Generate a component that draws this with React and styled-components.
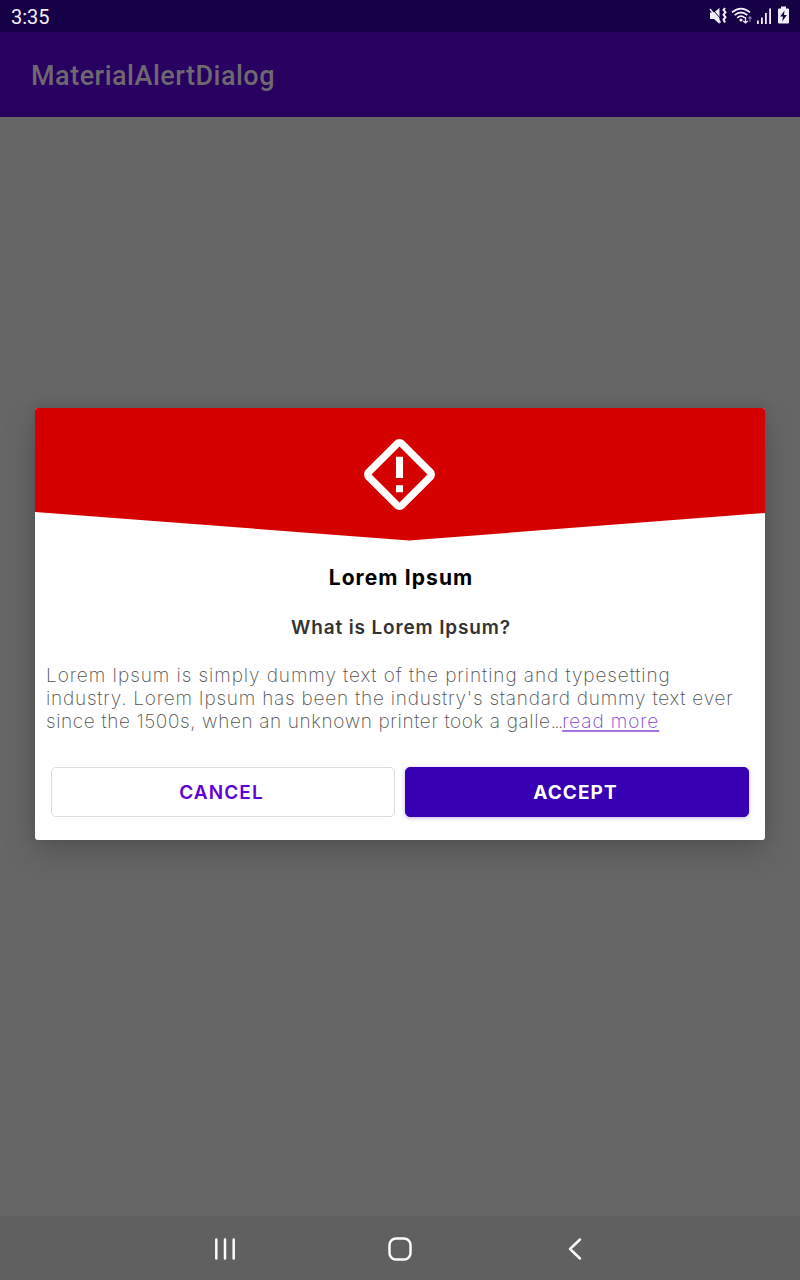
import React from 'react';
import styled, { createGlobalStyle } from 'styled-components';

const GlobalStyle = createGlobalStyle`
  * { box-sizing: border-box; }
  body { margin: 0; background: #666; }
`;

const Screen = styled.div`
  width: 800px;
  height: 1280px;
  display: flex;
  flex-direction: column;
  background: #666;
  overflow: hidden;
  font-family: Inter, 'Open Sans', sans-serif;
`;

const StatusBar = styled.header`
  height: 32px;
  flex: none;
  display: flex;
  align-items: center;
  justify-content: space-between;
  padding: 2px 10px 0 11px;
  background: #160046;
  color: #f3effa;
`;

const Clock = styled.span`
  font: 400 20px/30px Roboto, sans-serif;
`;

const StatusIcons = styled.svg`
  display: block;
  width: 82px;
  height: 20px;
  margin-top: -2px;
`;

const AppBar = styled.div`
  height: 85px;
  flex: none;
  display: flex;
  align-items: center;
  padding: 3px 31px 0;
  background: #270060;
`;

const AppTitle = styled.h1`
  margin: 0;
  color: #706870;
  font: 500 27px/32px Roboto, sans-serif;
  letter-spacing: 0.5px;
`;

const Content = styled.main`
  flex: 1;
  padding: 291px 35px 0;
`;

const Dialog = styled.section`
  height: 432px;
  border-radius: 3px;
  overflow: hidden;
  background: #fff;
  box-shadow: 0 12px 34px rgba(0, 0, 0, 0.18), 0 0 12px rgba(0, 0, 0, 0.1);
`;

const Banner = styled.div`
  height: 133px;
  padding-top: 24px;
  background: #d50000;
  clip-path: polygon(0 0, 100% 0, 100% 105px, 374px 132.5px, 0 104px);
`;

const WarningIcon = styled.svg`
  display: block;
  width: 85px;
  height: 85px;
  margin-left: 322px;
`;

const Title = styled.h2`
  margin: 22px 0 0;
  padding-left: 2px;
  text-align: center;
  color: #000;
  font-size: 21px;
  line-height: 30px;
  font-weight: 700;
  letter-spacing: ${(p) => p.$tracking}px;
`;

const Subtitle = styled.h3`
  margin: 20px 0 0;
  padding-left: 2px;
  text-align: center;
  color: #333;
  font-size: 19px;
  line-height: 30px;
  font-weight: 600;
  letter-spacing: ${(p) => p.$tracking}px;
`;

const Message = styled.p`
  margin: 21px 0 0;
  padding-left: 11px;
  color: #505050;
  font-size: 19px;
  line-height: 23px;
  font-weight: 200;
`;

const Line = styled.span`
  display: block;
  white-space: nowrap;
  letter-spacing: ${(p) => p.$tracking}px;
`;

const Dots = styled.span`
  letter-spacing: -1.6px;
  margin-right: 0.6px;
`;

const MoreLink = styled.a`
  color: #8040d8;
  letter-spacing: 0.9px;
  text-decoration: underline;
  text-decoration-color: #a673e2;
  text-decoration-thickness: 1.5px;
  text-underline-offset: 1.5px;
  text-decoration-skip-ink: none;
`;

const Actions = styled.div`
  display: grid;
  grid-template-columns: 1fr 1fr;
  gap: 10px;
  padding: 34px 16px 0;
`;

const Button = styled.button`
  height: 50px;
  padding: 0 3px 0 0;
  border-radius: 5px;
  border: 1px solid ${(p) => (p.$filled ? '#3700b3' : '#dedede')};
  background: ${(p) => (p.$filled ? '#3700b3' : '#fff')};
  color: ${(p) => (p.$filled ? '#fff' : '#6200d8')};
  box-shadow: ${(p) => (p.$filled ? '0 1px 4px rgba(55, 0, 179, 0.3)' : 'none')};
  font-family: inherit;
  font-size: 19px;
  font-weight: ${(p) => (p.$filled ? 700 : 600)};
  letter-spacing: ${(p) => p.$tracking}px;
`;

const NavBar = styled.nav`
  height: 64px;
  flex: none;
  display: flex;
  align-items: center;
  justify-content: center;
  gap: 135px;
  padding-top: 2px;
  background: #606060;
`;

const NavIcon = styled.svg`
  display: block;
  width: 40px;
  height: 40px;
  fill: none;
  stroke: #fafafa;
  stroke-width: 2.5;
  stroke-linecap: round;
  stroke-linejoin: round;
`;

function DeviceStatus() {
  return (
    <StatusIcons viewBox="708 6 82 20" fill="#f3effa">
      <path d="M710 12.5h4l5.5-4.8v16.3l-5.5-5h-4z" />
      <path d="M711 7.500l9.500 11" stroke="#160046" strokeWidth="1" />
      <path d="M710 9l10.500 13.500" stroke="#f3effa" strokeWidth="1.3" />
      <path d="M725 8l-1.500 2 2 2.200-2 2.500 2 2.500-2 2.300 1.500 3" fill="none" stroke="#f3effa" strokeWidth="2" />
      <g fill="none" stroke="#f3effa" strokeWidth="1.7">
        <path d="M732 12.4Q741 4.8 750 12.4" />
        <path d="M734.6 15.2Q741 9.8 747.4 15.2" />
        <path d="M737.2 17.8Q741 14.6 744.8 17.8" />
      </g>
      <circle cx="741" cy="20" r="1.6" />
      <path d="M745.5 17v6M743.2 21l2.3 2 2.3-2" fill="none" stroke="#f3effa" strokeWidth="1.3" />
      <path d="M750 22v-5M748.4 18.5l1.6-1.8 1.6 1.8" fill="none" stroke="#8f80ac" strokeWidth="1.1" />
      <path d="M757 20.5h1.8v3.5H757zM761 17.5h1.8v6.5H761zM765 13h1.8v11H765zM769.2 8.500h1.8v15.5h-1.8z" />
      <path d="M781 6.5h5v2h2a1 1 0 0 1 1 1v13a1 1 0 0 1-1 1h-9a1 1 0 0 1-1-1v-13a1 1 0 0 1 1-1h2z" />
      <path d="M784.5 10.5l-4.3 6h2.7l-.6 5 4.5-6.5h-2.8z" fill="#160046" />
    </StatusIcons>
  );
}

export default function App() {
  return (
    <Screen>
      <GlobalStyle />
      <StatusBar>
        <Clock>3:35</Clock>
        <DeviceStatus />
      </StatusBar>
      <AppBar>
        <AppTitle>MaterialAlertDialog</AppTitle>
      </AppBar>
      <Content>
        <Dialog role="alertdialog">
          <Banner>
            <WarningIcon viewBox="0 0 24 24" fill="#fff">
              <path d="M12 2c-.51 0-1.020.2-1.410.59L2.590 10.590c-.78.78-.78 2.040 0 2.820l8 8c.78.78 2.040.78 2.820 0l8-8c.78-.78.78-2.040 0-2.820l-8-8C13.020 2.200 12.510 2 12 2zm0 2.100l7.900 7.900-7.900 7.900L4.100 12z" />
              <path d="M11 7h2v6h-2zM11 15h2v2h-2z" />
            </WarningIcon>
          </Banner>
          <Title $tracking={1.1}>Lorem Ipsum</Title>
          <Subtitle $tracking={0.85}>What is Lorem Ipsum?</Subtitle>
          <Message>
            <Line $tracking={0.92}>Lorem Ipsum is simply dummy text of the printing and typesetting</Line>
            <Line $tracking={0.78}>industry. Lorem Ipsum has been the industry's standard dummy text ever</Line>
            <Line $tracking={0.62}>
              since the 1500s, when an unknown printer took a galle<Dots>...</Dots><MoreLink>read more</MoreLink>
            </Line>
          </Message>
          <Actions>
            <Button $tracking={1.1}>CANCEL</Button>
            <Button $filled $tracking={1.1}>ACCEPT</Button>
          </Actions>
        </Dialog>
      </Content>
      <NavBar>
        <NavIcon viewBox="0 0 40 40">
          <path d="M11.3 10.5v19M20 10.5v19M28.7 10.5v19" />
        </NavIcon>
        <NavIcon viewBox="0 0 40 40">
          <rect x="9.5" y="9.5" width="21" height="21" rx="6.5" />
        </NavIcon>
        <NavIcon viewBox="0 0 40 40">
          <path d="M25 10.5L15 20l10 9.5" />
        </NavIcon>
      </NavBar>
    </Screen>
  );
}
